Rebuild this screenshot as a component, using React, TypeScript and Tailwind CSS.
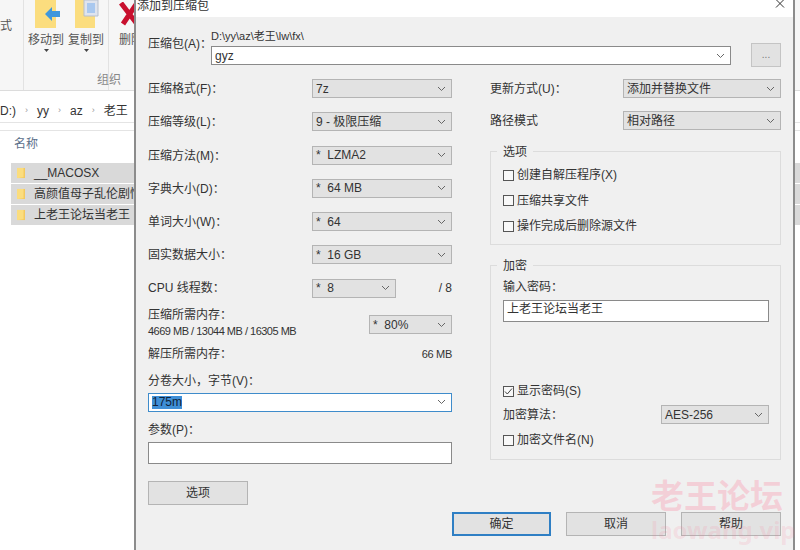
import React from "react";

const FONT = '"Liberation Sans", "Noto Sans CJK SC", sans-serif';

function Chevron() {
  return (
    <svg width="9" height="6" viewBox="0 0 9 6" className="shrink-0">
      <path d="M1 1l3.5 3.5L8 1" fill="none" stroke="#666" strokeWidth="1" />
    </svg>
  );
}

function Combo({ value, className }: { value: string; className: string }) {
  return (
    <div className={`flex h-[19px] items-center justify-between border border-[#b4b4b4] bg-[#e2e2e2] pl-[3px] pr-[5px] text-[12px] leading-none text-[#333] ${className}`}>
      <span className="whitespace-pre">{value}</span>
      <Chevron />
    </div>
  );
}

function Row({ label, value }: { label: string; value: string }) {
  return (
    <div className="flex h-[33.3px] items-start justify-between">
      <span className="pt-[1px] leading-[19px]">{label}</span>
      <Combo value={value} className="w-[140px]" />
    </div>
  );
}

function Check({ label, checked }: { label: string; checked?: boolean }) {
  return (
    <div className="flex items-center gap-[3px] leading-[16px]">
      <span className="flex h-[11px] w-[11px] items-center justify-center border border-[#555] bg-[#f8f8f8]">
        {checked && (
          <svg width="9" height="9" viewBox="0 0 9 9">
            <path d="M1 4.5l2.3 2.5L8 1.5" fill="none" stroke="#444" strokeWidth="1" />
          </svg>
        )}
      </span>
      <span>{label}</span>
    </div>
  );
}

function Btn({ label, primary, className }: { label: string; primary?: boolean; className: string }) {
  return (
    <div className={`flex h-[24px] items-center justify-center border bg-[#e2e2e2] ${primary ? "border-2 border-[#2f7fc4]" : "border-[#b4b4b4]"} ${className}`}>
      {label}
    </div>
  );
}

function Folder({ className }: { className?: string }) {
  return (
    <svg viewBox="0 0 22 28" className={className}>
      <path d="M0 0h22v28H0z" fill="#fbdd7e" />
      <path d="M18 0h4v28H4l14-2z" fill="#f3c95e" />
    </svg>
  );
}

function Ribbon() {
  return (
    <div className="relative flex h-[91px] border-b border-[#dcdcdc] bg-[#f6f6f6] text-[12px] text-[#555]">
      <div className="flex w-[24px] items-start border-r border-[#e2e2e2] pt-[17px]">
        <span>式</span>
      </div>
      <div className="flex w-[85px] flex-col border-r border-[#e2e2e2]">
        <div className="flex gap-[4px] pl-[4px]">
          <div className="flex w-[36px] flex-col items-center">
            <svg width="26" height="28" viewBox="0 0 26 28" className="ml-[4px]">
              <path d="M0 0h21v28H0z" fill="#fbdd7e" />
              <path d="M10 21l7-7v4h8v6h-8v4z" fill="#3f97dd" transform="translate(0 -7)" />
            </svg>
            <span className="mt-[3px] whitespace-nowrap leading-[18px]">移动到</span>
            <svg width="5" height="3" viewBox="0 0 5 3"><path d="M0 0h5L2.5 3z" fill="#444" /></svg>
          </div>
          <div className="flex w-[36px] flex-col items-center">
            <svg width="26" height="28" viewBox="0 0 26 28">
              <path d="M2 0h20v28H2z" fill="#fbdd7e" />
              <path d="M11 0h14v16H11z" fill="#dfe4ee" stroke="#b7bfcc" />
              <path d="M14 3h8v10h-8z" fill="#a9c8ef" />
            </svg>
            <span className="mt-[3px] whitespace-nowrap leading-[18px]">复制到</span>
            <svg width="5" height="3" viewBox="0 0 5 3"><path d="M0 0h5L2.5 3z" fill="#444" /></svg>
          </div>
        </div>
      </div>
      <div className="flex flex-1 flex-col items-start pl-[10px]">
        <svg width="20" height="24" viewBox="0 0 20 24" className="mt-[2px]">
          <path d="M2 1l16 21M18 1L4 22" stroke="#c8102e" strokeWidth="5" fill="none" />
        </svg>
        <span className="mt-[5px] whitespace-nowrap leading-[18px]">删除</span>
      </div>
      <span className="absolute left-[97px] top-[71px] leading-[18px] text-[#888]">组织</span>
    </div>
  );
}

function Explorer() {
  return (
    <div className="h-full bg-white text-[12px] text-[#444]">
      <Ribbon />
      <div className="mt-[9px] flex h-[23px] items-center gap-[9px] border-b border-[#e4e4e4] text-[#333]">
        <span>D:)</span>
        <span className="text-[9px] text-[#999]">›</span>
        <span>yy</span>
        <span className="text-[9px] text-[#999]">›</span>
        <span>az</span>
        <span className="text-[9px] text-[#999]">›</span>
        <span className="whitespace-nowrap">老王</span>
      </div>
      <div className="mt-[7px] border-t border-[#e4e4e4] pt-[4px]">
        <div className="pl-[14px] leading-[18px] text-[#5b6f8a]">名称</div>
        <div className="mt-[10px] ml-[11px] flex flex-col gap-[1px]">
          {["__MACOSX", "高颜值母子乱伦剧情", "上老王论坛当老王"].map((n) => (
            <div key={n} className="flex h-[20px] items-center gap-[9px] overflow-hidden whitespace-nowrap bg-[#d9d9d9] pl-[6px] text-[#333]">
              <Folder className="h-[12px] w-[8px] shrink-0" />
              <span>{n}</span>
            </div>
          ))}
        </div>
      </div>
    </div>
  );
}

function Dialog() {
  return (
    <div className="absolute left-[134px] top-0 flex h-[550px] w-[661px] flex-col border-x-2 border-x-[#8c8c8c] bg-[#f0f0f0] text-[12px] text-[#333]">
      <div className="relative flex h-[17px] items-start justify-between overflow-hidden bg-white pl-[1px] pr-[8px]">
        <span className="-mt-[3px] leading-[18px]">添加到压缩包</span>
        <svg width="10" height="10" viewBox="0 0 10 10" className="-mt-[1px]">
          <path d="M1 0.5l8 8M9 0.5l-8 8" stroke="#333" strokeWidth="1" />
        </svg>
      </div>

      <div className="flex flex-1 flex-col pl-[12px] pr-[12px]">
        <div className="flex h-[62px] items-start">
          <span className="mt-[18px] w-[63px] shrink-0 whitespace-nowrap leading-[18px]">压缩包(A)：</span>
          <div className="mt-[12px] w-[520px]">
            <div className="text-[11px] leading-[14px]">D:\yy\az\老王\lw\fx\</div>
            <div className="mt-[3px] flex h-[19px] items-center justify-between border border-[#8a8a8a] bg-white pl-[3px] pr-[5px]">
              <span>gyz</span>
              <Chevron />
            </div>
          </div>
          <div className="ml-[20px] mt-[26px] flex h-[24px] w-[30px] items-center justify-center border border-[#c4c4c4] bg-[#e2e2e2] text-[10px] leading-none text-[#777]">...</div>
        </div>

        <div className="flex flex-1 justify-between">
          <div className="w-[304px]">
            <Row label="压缩格式(F)：" value="7z" />
            <Row label="压缩等级(L)：" value="9 - 极限压缩" />
            <Row label="压缩方法(M)：" value="*  LZMA2" />
            <Row label="字典大小(D)：" value="*  64 MB" />
            <Row label="单词大小(W)：" value="*  64" />
            <Row label="固实数据大小：" value="*  16 GB" />
            <div className="flex h-[19px] items-center">
              <span className="w-[164px]">CPU 线程数：</span>
              <Combo value="*  8" className="w-[84px]" />
              <span className="ml-auto">/ 8</span>
            </div>
            <div className="mt-[11px] flex h-[32px] items-center justify-between">
              <div className="-mt-[3px] leading-[16px]">
                <div>压缩所需内存：</div>
                <div className="whitespace-nowrap text-[11px] tracking-[-0.5px]">4669 MB / 13044 MB / 16305 MB</div>
              </div>
              <Combo value="*  80%" className="w-[83px]" />
            </div>
            <div className="mt-[4px] flex justify-between leading-[18px]">
              <span>解压所需内存：</span>
              <span className="text-[11px] tracking-[-0.3px]">66 MB</span>
            </div>
            <div className="mt-[9px] leading-[18px]">分卷大小，字节(V)：</div>
            <div className="mt-[3px] flex h-[19px] items-center justify-between border border-[#3f8ccb] bg-white pl-[3px] pr-[5px]">
              <span className="bg-[#3f8fd6] leading-[13px] text-[#10233a]">175m</span>
              <Chevron />
            </div>
            <div className="mt-[9px] leading-[18px]">参数(P)：</div>
            <div className="mt-[3px] h-[22px] border border-[#8a8a8a] bg-white" />
            <Btn label="选项" className="mt-[17px] w-[100px]" />
          </div>

          <div className="w-[291px]">
            <div className="flex h-[32px] items-start justify-between">
              <span className="pt-[1px] leading-[19px]">更新方式(U)：</span>
              <Combo value="添加并替换文件" className="w-[158px]" />
            </div>
            <div className="flex h-[40px] items-start justify-between">
              <span className="pt-[1px] leading-[19px]">路径模式</span>
              <Combo value="相对路径" className="w-[158px]" />
            </div>
            <div className="h-[94px] border border-[#dcdcdc] pl-[12px]">
              <span className="-mt-[8px] ml-[-6px] block w-fit bg-[#f0f0f0] px-[6px] leading-[16px]">选项</span>
              <div className="mt-[7px] flex flex-col gap-[9.5px]">
                <Check label="创建自解压程序(X)" />
                <Check label="压缩共享文件" />
                <Check label="操作完成后删除源文件" />
              </div>
            </div>
            <div className="mt-[20px] h-[195px] border border-[#dcdcdc] pl-[12px] pr-[11px]">
              <span className="-mt-[8px] ml-[-6px] block w-fit bg-[#f0f0f0] px-[6px] leading-[16px]">加密</span>
              <div className="mt-[4px] leading-[18px]">输入密码：</div>
              <div className="mt-[4px] flex h-[22px] items-start border border-[#8a8a8a] bg-white pl-[3px] leading-[16px]">上老王论坛当老王</div>
              <div className="mt-[61px]"><Check label="显示密码(S)" checked /></div>
              <div className="mt-[6px] flex h-[19px] items-center justify-between">
                <span>加密算法：</span>
                <Combo value="AES-256" className="w-[108px]" />
              </div>
              <div className="mt-[8px]"><Check label="加密文件名(N)" /></div>
            </div>
          </div>
        </div>

        <div className="mb-[14px] flex justify-end gap-[15px]">
          <Btn label="确定" primary className="w-[99px]" />
          <Btn label="取消" className="w-[100px]" />
          <Btn label="帮助" className="w-[100px]" />
        </div>
      </div>
    </div>
  );
}

export default function App() {
  return (
    <div className="relative h-[550px] w-[800px] overflow-hidden bg-white" style={{ fontFamily: FONT }}>
      <Explorer />
      <Dialog />
      <div className="pointer-events-none absolute left-[651px] top-[476px] flex flex-col font-bold font-['Noto_Sans','Noto_Sans_CJK_SC',sans-serif]">
        <span className="whitespace-nowrap text-[33px] leading-[40px] text-[#ff6e8c]/25">老王论坛</span>
        <span className="-mt-[1px] whitespace-nowrap text-[24px] leading-[30px] text-[#ff6e8c]/15">laowang.vip</span>
      </div>
    </div>
  );
}
